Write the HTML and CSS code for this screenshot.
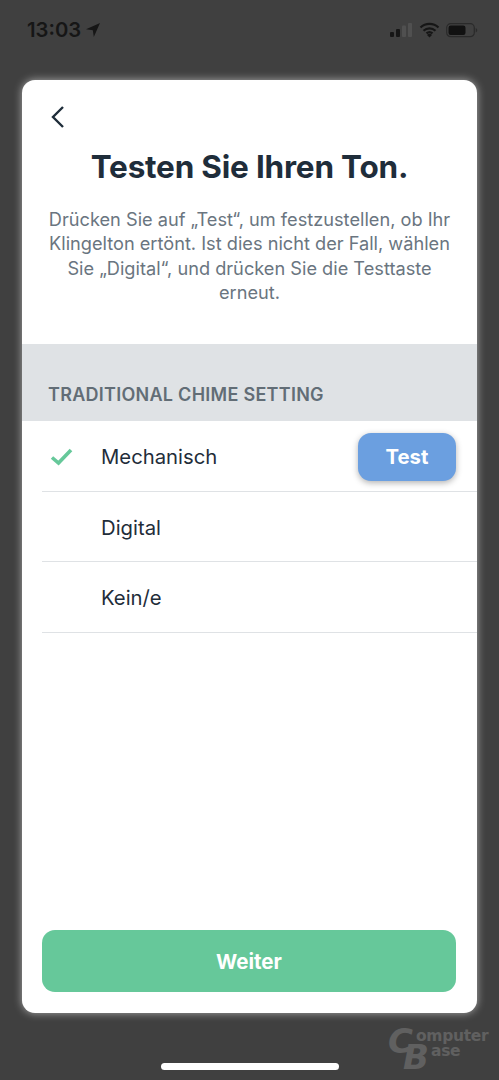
FILE: index.html
```html
<!DOCTYPE html>
<html lang="de">
<head>
<meta charset="utf-8">
<title>Testen Sie Ihren Ton.</title>
<link rel="stylesheet" href="styles.css">
</head>
<body>
<div class="screen">
  <header class="status">
    <div class="status-left">
      <span class="time">13:03</span>
      <svg class="loc" width="14" height="14" viewBox="0 0 14 14"><path d="M14 0 0 6.300 6.800 7.200 7.800 14Z" fill="#161616"/></svg>
    </div>
    <div class="status-right">
      <svg width="23" height="16" viewBox="0 0 23 16"><rect x="0" y="10" width="4" height="5" rx="1" fill="#161616"/><rect x="6" y="7" width="4" height="8" rx="1" fill="#161616"/><rect x="12" y="3.500" width="4" height="11.500" rx="1" fill="#505050"/><rect x="18" y="1" width="4" height="14" rx="1" fill="#505050"/></svg>
      <svg width="21" height="16" viewBox="0 0 21 16"><path d="M1.500 5.500a13 13 0 0 1 18 0M4.500 8.700a9 9 0 0 1 12 0M7.500 11.400a4.500 4.500 0 0 1 6 0" fill="none" stroke="#161616" stroke-width="2.200"/><path d="M10.500 15.500 8 13a3.500 3.500 0 0 1 5 0Z" fill="#161616"/></svg>
      <svg width="32" height="16" viewBox="0 0 32 16"><rect x="0.700" y="1.700" width="27.600" height="13" rx="4" fill="none" stroke="#2a2a2a" stroke-width="1.200"/><rect x="2.500" y="3.500" width="17" height="9.500" rx="2.200" fill="#111"/><path d="M29.700 6v4.500c1-.4 1.500-1.200 1.500-2.200s-.5-1.900-1.500-2.300Z" fill="#2a2a2a"/></svg>
    </div>
  </header>

  <main class="card">
    <div class="top">
      <button class="back" aria-label="Zurück">
        <svg width="14" height="24" viewBox="0 0 14 24"><path d="M12 2 2 12l10 10" fill="none" stroke="#1f2d3a" stroke-width="2.400"/></svg>
      </button>
      <h1 class="title">Testen Sie Ihren Ton.</h1>
      <p class="intro">Drücken Sie auf „Test“, um festzustellen, ob Ihr Klingelton ertönt. Ist dies nicht der Fall, wählen Sie „Digital“, und drücken Sie die Testtaste erneut.</p>
    </div>

    <div class="band">TRADITIONAL CHIME SETTING</div>

    <ul class="options">
      <li class="option">
        <span class="tick">
          <svg width="24" height="18" viewBox="0 0 24 18"><path d="M2 9.500 8.500 15 21 2" fill="none" stroke="#66c89a" stroke-width="3.600"/></svg>
        </span>
        <span class="label">Mechanisch</span>
        <button class="test">Test</button>
      </li>
      <li class="option"><span class="tick"></span><span class="label">Digital</span></li>
      <li class="option"><span class="tick"></span><span class="label">Kein/e</span></li>
    </ul>

    <div class="footer">
      <button class="next">Weiter</button>
    </div>
  </main>

  <div class="home"></div>

  <div class="mark">
    <span class="mark-c">C</span><span class="mark-top">omputer</span>
    <span class="mark-b">B</span><span class="mark-bottom">ase</span>
  </div>
</div>
</body>
</html>
```
FILE: styles.css
```css
* { box-sizing: border-box; }
html, body { margin: 0; padding: 0; }
body { font-family: Inter, "Liberation Sans", sans-serif; background: #404040; }

.screen {
  position: relative;
  width: 499px;
  height: 1080px;
  overflow: hidden;
  display: flex;
  flex-direction: column;
  background: #404040;
}

.status {
  height: 80px;
  flex: none;
  padding: 18px 21px 0 27px;
  display: flex;
  justify-content: space-between;
  align-items: flex-start;
}
.status-left { display: flex; align-items: center; gap: 5px; height: 24px; }
.time { font-size: 20.300px; font-weight: 600; color: #161616; line-height: 24px; }
.status-right { display: flex; align-items: center; gap: 6px; height: 24px; }
.status-right svg { display: block; }
.loc { display: block; }

.card {
  width: 455px;
  height: 933px;
  flex: none;
  margin-left: 22px;
  background: #fff;
  border-radius: 13px;
  box-shadow: 0 0 9px rgba(255, 255, 255, .55);
  display: flex;
  flex-direction: column;
  overflow: hidden;
}

.top { height: 264px; flex: none; padding: 25px 26px 0; }
.back {
  display: block;
  border: 0;
  background: none;
  padding: 0;
  margin: 0 0 0 3px;
  height: 24px;
}
.back svg { display: block; }
.title {
  margin: 19px -10px 0;
  text-align: center;
  font-size: 31.500px;
  line-height: 38px;
  font-weight: 700;
  color: #1f2d3a;
  letter-spacing: -.2px;
  white-space: nowrap;
}
.intro {
  margin: 21px -4px 0;
  text-align: center;
  font-size: 18.200px;
  line-height: 24.300px;
  color: #6a7580;
}

.band {
  height: 77px;
  flex: none;
  background: #dfe2e5;
  padding: 40px 0 0 26px;
  font-size: 18px;
  line-height: 22px;
  font-weight: 600;
  color: #626d76;
  letter-spacing: .27px;
}

.options { list-style: none; margin: 0; padding: 0 0 0 20px; }
.option {
  height: 70.500px;
  display: flex;
  align-items: center;
  border-bottom: 1px solid #dfe2e5;
  padding: 2px 21px 0 0;
}
.tick { width: 59px; flex: none; padding-left: 8px; display: flex; }
.label { flex: 1; font-size: 20.300px; color: #1f2d3a; }
.test {
  width: 98px;
  height: 48px;
  border: 0;
  border-radius: 13px;
  background: #6b9fe0;
  color: #fff;
  font: 700 20.300px Inter, "Liberation Sans", sans-serif;
  box-shadow: 0 2px 6px rgba(0, 0, 0, .3);
}

.footer {
  margin-top: auto;
  padding: 0 21px 21px 20px;
}
.next {
  display: block;
  width: 100%;
  height: 62px;
  border: 0;
  border-radius: 13px;
  background: #66c89a;
  color: #fff;
  font: 700 20.500px Inter, "Liberation Sans", sans-serif;
}

.home {
  width: 178px;
  height: 7px;
  margin: 50px 0 0 161px;
  flex: none;
  border-radius: 4px;
  background: #fff;
}

.mark {
  position: absolute;
  left: 388px;
  top: 1024px;
  width: 105px;
  height: 50px;
  color: #606060;
  font-family: "DejaVu Sans", sans-serif;
  font-weight: 700;
}
.mark span { position: absolute; line-height: 1; }
.mark-c { left: 0; top: 0; font-size: 34px; font-style: italic; }
.mark-b { left: 15px; top: 16px; font-size: 34px; font-style: italic; }
.mark-top { left: 28px; top: 5px; font-size: 15.500px; letter-spacing: -.3px; }
.mark-bottom { left: 43px; top: 20px; font-size: 15.500px; letter-spacing: -.3px; }
```
